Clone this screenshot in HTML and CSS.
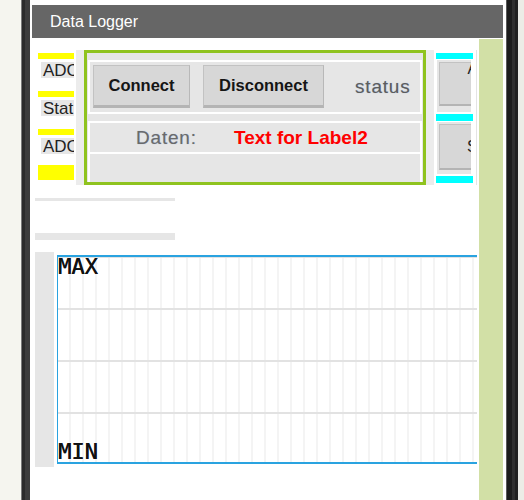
FILE: index.html
```html
<!DOCTYPE html>
<html>
<head>
<meta charset="utf-8">
<link rel="stylesheet" href="styles.css">
</head>
<body>
<div class="page">
  <div class="bg-left"></div>
  <div class="frame-left"></div>
  <div class="screen">
    <div class="titlebar">Data Logger</div>
    <div class="main">
      <div class="content">
        <div class="toprow">
          <div class="leftcol">
            <div class="ybar"></div>
            <div class="lbl">ADC</div>
            <div class="ybar"></div>
            <div class="lbl">Stat</div>
            <div class="ybar"></div>
            <div class="lbl last">ADC</div>
            <div class="ybar big"></div>
          </div>
          <div class="strip"></div>
          <div class="panel">
            <div class="rowa">
              <div class="btn connect">Connect</div>
              <div class="btn disconnect">Disconnect</div>
              <span class="status">status</span>
            </div>
            <div class="rowb">
              <span class="daten">Daten:</span>
              <span class="label2">Text for Label2</span>
            </div>
            <div class="rowc"></div>
          </div>
          <div class="strip"></div>
          <div class="rightcol">
            <div class="cbar"></div>
            <div class="rwrap first"><div class="rbtn one">Auto<br>Null</div></div>
            <div class="cbar mid"></div>
            <div class="rwrap"><div class="rbtn two">Start</div></div>
            <div class="cbar end"></div>
          </div>
          <div class="vline"></div>
        </div>
        <div class="gbar"></div>
        <div class="gbar thick"></div>
        <div class="chartrow">
          <div class="chartside"></div>
          <div class="chart">
            <span class="axis">MAX</span>
            <span class="axis">MIN</span>
          </div>
        </div>
      </div>
      <div class="green"></div>
    </div>
  </div>
  <div class="frame-right"></div>
  <div class="bg-right"></div>
</div>
</body>
</html>
```
FILE: styles.css
```css
html, body {
  margin: 0;
  padding: 0;
}
body {
  width: 524px;
  height: 500px;
  overflow: hidden;
  font-family: "Liberation Sans", Arial, sans-serif;
  background: #f5f5ef;
}
.page {
  display: flex;
  height: 500px;
}
.bg-left {
  width: 21px;
  background: #f5f5ef;
}
.frame-left {
  width: 9px;
  background: linear-gradient(to right, #7a7a7a 0 1px, #2b2b2b 1px 4px, #3c3c3c 4px 9px);
}
.screen {
  width: 476px;
  background: #fff;
  padding-top: 5px;
  box-sizing: border-box;
}
.titlebar {
  margin-left: 2px;
  width: 471px;
  height: 33px;
  line-height: 33px;
  background: #666666;
  color: #fff;
  font-size: 16px;
  padding-left: 18px;
  box-sizing: border-box;
}
.main {
  display: flex;
  height: 462px;
}
.content {
  margin-left: 2px;
  width: 447px;
}
.green {
  width: 24px;
  margin-top: 1px;
  background: #d2e0a6;
}
.toprow {
  display: flex;
  margin-top: 12px;
  padding-left: 6px;
  height: 135px;
}
.leftcol {
  width: 38px;
  padding-top: 3px;
  box-sizing: border-box;
}
.ybar {
  width: 36px;
  height: 6px;
  background: #ffff00;
}
.ybar.big {
  height: 15px;
}
.lbl {
  margin: 3px 0 13px 3px;
  width: 33px;
  height: 16px;
  line-height: 17px;
  background: #e6e6e6;
  font-size: 17px;
  color: #222;
  padding-left: 2px;
  box-sizing: border-box;
  overflow: hidden;
  white-space: nowrap;
}
.lbl.last {
  margin-bottom: 11px;
}
.strip {
  width: 8px;
  background: #ececec;
}
.panel {
  width: 342px;
  height: 135px;
  box-sizing: border-box;
  border: 3px solid #8fc31f;
  background: #e6e6e6;
  padding: 7px 1px 0 1px;
}
.rowa {
  height: 54px;
  box-sizing: border-box;
  border: 2px solid #fff;
  display: flex;
  align-items: flex-start;
}
.btn {
  margin-top: 3px;
  height: 43px;
  box-sizing: border-box;
  background: #d7d7d7;
  border: 1px solid #c2c2c2;
  border-bottom: 3px solid #b4b4b4;
  border-right: 1px solid #b8b8b8;
  font-weight: bold;
  font-size: 16.5px;
  color: #151515;
  display: flex;
  align-items: center;
  justify-content: center;
}
.connect {
  margin-left: 3px;
  width: 97px;
}
.disconnect {
  margin-left: 13px;
  width: 121px;
}
.status {
  margin-left: 31px;
  align-self: center;
  font-size: 19px;
  letter-spacing: 0.8px;
  color: #5d5d5d;
  text-shadow: 0 0 1px #9bb3d6;
}
.rowb {
  margin-top: 7px;
  height: 33px;
  box-sizing: border-box;
  border: 2px solid #fff;
  display: flex;
  align-items: center;
}
.daten {
  margin-left: 46px;
  width: 98px;
  font-size: 19px;
  letter-spacing: 0.8px;
  color: #6a6a6a;
  text-shadow: 0 0 1px #9bb3d6;
}
.label2 {
  font-size: 19px;
  font-weight: bold;
  color: #ff0000;
}
.rowc {
  height: 28px;
  border-left: 2px solid #fff;
  border-right: 2px solid #fff;
}
.rightcol {
  width: 42px;
  padding-top: 3px;
  box-sizing: border-box;
}
.cbar {
  margin-left: 2px;
  width: 37px;
  height: 6px;
  background: #00ffff;
}
.cbar.mid {
  margin-top: 2px;
  height: 7px;
}
.cbar.end {
  margin-top: 2px;
  height: 7px;
}
.rwrap {
  margin-top: 1px;
  margin-left: 3px;
  width: 34px;
  height: 52px;
  background: #e6e6e6;
  padding: 2px 0 0 2px;
  box-sizing: border-box;
  overflow: hidden;
}
.rbtn {
  box-sizing: border-box;
  background: #d7d7d7;
  border: 1px solid #c2c2c2;
  border-bottom: 2px solid #b4b4b4;
  font-size: 16px;
  color: #222;
  text-align: center;
  display: flex;
  align-items: center;
  justify-content: center;
}
.rbtn.one {
  width: 90px;
  height: 44px;
  line-height: 30px;
}
.rbtn.two {
  width: 90px;
  height: 46px;
}
.vline {
  width: 1px;
  background: #e4e4e4;
}
.gbar {
  margin-top: 13px;
  margin-left: 3px;
  width: 140px;
  height: 3px;
  background: #e6e6e6;
}
.gbar.thick {
  margin-top: 32px;
  height: 7px;
}
.chartrow {
  display: flex;
  margin-top: 12px;
  height: 215px;
}
.chartside {
  margin-left: 3px;
  width: 19px;
  background: #e6e6e6;
}
.chart {
  margin-left: 3px;
  margin-top: 3px;
  width: 420px;
  height: 209px;
  box-sizing: border-box;
  border-top: 2px solid #2aa3e0;
  border-bottom: 2px solid #2aa3e0;
  border-left: 1px solid #2aa3e0;
  background-color: #fff;
  background-image:
    linear-gradient(to bottom, transparent 0 50px, #e2e2e2 50px 52px),
    repeating-linear-gradient(to right, transparent 0 11px, #f4f4f4 11px 13px);
  background-size: 100% 52px, 100% 100%;
  background-position: 0 1px, 0 0;
  display: flex;
  flex-direction: column;
  justify-content: space-between;
  align-items: flex-start;
}
.axis {
  font-family: "DejaVu Sans Mono", monospace;
  font-size: 22px;
  line-height: 20px;
  color: #111;
  text-shadow: 0.5px 0 0 #111;
}
.frame-right {
  width: 12px;
  background: linear-gradient(to right, #5a5a5a 0 1px, #1c1c1c 1px 6px, #2f2f2f 6px 9px, #202020 9px 12px);
}
.bg-right {
  width: 6px;
  background: #ecece6;
}
```
